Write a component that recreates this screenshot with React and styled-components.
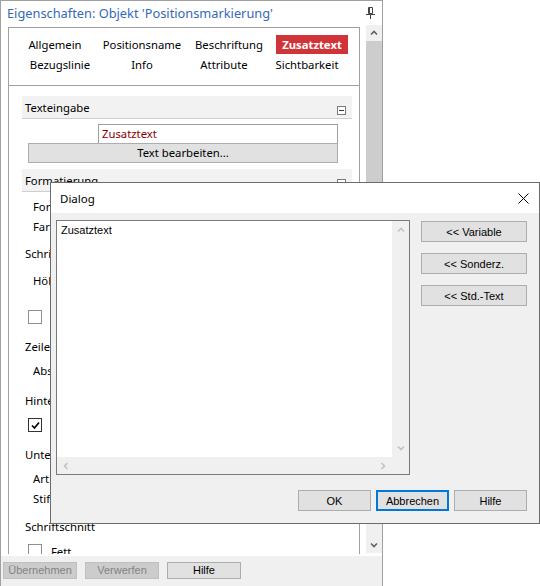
import React from 'react'
import styled, { createGlobalStyle } from 'styled-components'

// Grundstil der Seite
const GlobalStyle = createGlobalStyle`
  html, body {
    margin: 0;
    padding: 0;
    background: #fff;
  }
  body {
    font-family: "Noto Sans", "Liberation Sans", sans-serif;
    color: #000;
  }
`

const Screen = styled.div`
  position: relative;
  width: 540px;
  height: 586px;
  overflow: hidden;
  background: #fff;
`

// Eigenschaften-Fenster
const Window = styled.div`
  width: 383px;
  height: 586px;
  box-sizing: border-box;
  border: 1px solid #a0a0a0;
  border-bottom: none;
  display: flex;
  flex-direction: column;
  background: #fff;
`

const TitleBar = styled.div`
  height: 24px;
  flex-shrink: 0;
  display: flex;
  align-items: center;
  justify-content: space-between;
  padding: 0 7px 0 6px;
`

const TitleText = styled.span`
  font-size: 12.8px;
  color: #3469b8;
  white-space: nowrap;
`

const Body = styled.div`
  flex: 1;
  min-height: 0;
  display: flex;
  gap: 6px;
  padding-left: 7px;
`

const Panel = styled.div`
  width: 352px;
  margin: 2px 0 2px;
  box-sizing: border-box;
  border: 1px solid #a0a0a0;
  border-bottom: none;
  overflow: hidden;
`

const TabStrip = styled.div`
  padding: 7px 0 10px 3px;
  border-bottom: 1px solid #a0a0a0;
`

const TabRow = styled.div`
  display: grid;
  grid-template-columns: ${p => p.$cols};
  height: 20px;
`

const Tab = styled.div`
  justify-self: center;
  height: 19px;
  line-height: 19px;
  padding: 0 6px;
  font-size: 11.3px;
  white-space: nowrap;
  color: ${p => (p.$active ? '#fff' : '#000')};
  background: ${p => (p.$active ? '#d13438' : 'transparent')};
  font-weight: ${p => (p.$active ? 700 : 400)};
`

const Section = styled.div`
  margin: ${p => p.$mt}px 7px 0 13px;
`

const SectionHeader = styled.div`
  height: 22px;
  display: flex;
  justify-content: space-between;
  background: #f2f2f2;
  border-bottom: 1px solid #cfcfcf;
  padding-left: 3px;
  font-size: 11.3px;
`

const SectionLabel = styled.span`
  align-self: center;
  white-space: nowrap;
`

const CollapseBox = styled.span`
  align-self: flex-end;
  width: 7px;
  height: 7px;
  margin: 0 6px 3px 0;
  border: 1px solid #7a7a7a;
  background: #fff;
  display: flex;
  align-items: center;
  justify-content: center;
  &::after {
    content: '';
    width: 5px;
    height: 1px;
    background: #333;
  }
`

const TextField = styled.div`
  margin: 5px 0 0 76px;
  width: 240px;
  height: 20px;
  box-sizing: border-box;
  border: 1px solid #a0a0a0;
  padding-left: 3px;
  font-size: 11.3px;
  line-height: 18px;
  color: #8b0000;
`

const WideButton = styled.div`
  margin: -1px 0 0 6px;
  width: 310px;
  height: 20px;
  box-sizing: border-box;
  border: 1px solid #adadad;
  background: #e1e1e1;
  text-align: center;
  font-size: 11.3px;
  line-height: 18px;
`

const FormRow = styled.div`
  height: ${p => p.$h || 20}px;
  margin-top: ${p => p.$mt}px;
  display: flex;
  align-items: center;
  gap: 9px;
  padding-left: ${p => p.$indent}px;
  font-size: 11.3px;
  white-space: nowrap;
`

const Box = styled.span`
  width: 14px;
  height: 14px;
  flex-shrink: 0;
  box-sizing: border-box;
  border: 1px solid ${p => (p.$checked ? '#333' : '#8f8f8f')};
  background: #fff;
  display: flex;
  align-items: center;
  justify-content: center;
`

const ScrollBar = styled.div`
  width: 16px;
  margin-bottom: 3px;
  display: flex;
  flex-direction: column;
  background: #f0f0f0;
`

const ArrowCell = styled.div`
  height: 16px;
  flex-shrink: 0;
  display: flex;
  align-items: center;
  justify-content: center;
`

const Thumb = styled.div`
  height: 481px;
  flex-shrink: 0;
  background: #cdcdcd;
`

const Track = styled.div`
  flex: 1;
`

const Footer = styled.div`
  height: 30px;
  box-sizing: border-box;
  flex-shrink: 0;
  display: flex;
  align-items: flex-start;
  gap: 8px;
  padding: 6px 0 0 2px;
  background: #f0f0f0;
`

const FooterButton = styled.div`
  width: 74px;
  height: 17px;
  box-sizing: border-box;
  border: 1px solid ${p => (p.$disabled ? '#bfbfbf' : '#adadad')};
  background: ${p => (p.$disabled ? '#cccccc' : '#e1e1e1')};
  color: ${p => (p.$disabled ? '#838383' : '#000')};
  font-family: "Liberation Sans", Arial, sans-serif;
  font-size: 11px;
  line-height: 15px;
  text-align: center;
`

// Dialog über dem Fenster
const Dialog = styled.div`
  position: absolute;
  left: 50px;
  top: 182px;
  width: 490px;
  height: 342px;
  box-sizing: border-box;
  border: 1px solid #6b6b6b;
  background: #f0f0f0;
  display: flex;
  flex-direction: column;
`

const DialogTitle = styled.div`
  height: 30px;
  flex-shrink: 0;
  display: flex;
  align-items: center;
  justify-content: space-between;
  padding: 0 10px 0 9px;
  background: #fff;
  font-size: 11.5px;
`

const DialogBody = styled.div`
  flex: 1;
  display: flex;
  flex-direction: column;
  padding: 7px 12px 12px 5px;
  font-family: "Liberation Sans", Arial, sans-serif;
  font-size: 11px;
`

const TopRow = styled.div`
  display: flex;
  gap: 11px;
`

const TextArea = styled.div`
  width: 354px;
  height: 255px;
  box-sizing: border-box;
  border: 1px solid #7a7a7a;
  background: #fff;
  display: grid;
  grid-template-columns: 1fr 17px;
  grid-template-rows: 1fr 17px;
`

const TextContent = styled.div`
  padding: 2px 0 0 4px;
  line-height: 14px;
`

const VScroll = styled.div`
  background: #f0f0f0;
  display: flex;
  flex-direction: column;
  justify-content: space-between;
  align-items: center;
  padding: 5px 0;
`

const HScroll = styled.div`
  background: #f0f0f0;
  display: flex;
  justify-content: space-between;
  align-items: center;
  padding: 0 5px;
`

const Corner = styled.div`
  background: #f0f0f0;
`

const SideButtons = styled.div`
  display: flex;
  flex-direction: column;
  gap: 11px;
  padding-top: 1px;
`

const DialogButton = styled.div`
  width: ${p => p.$w}px;
  height: 21px;
  box-sizing: border-box;
  border: ${p => (p.$focus ? '2px solid #0078d7' : '1px solid #adadad')};
  background: #e1e1e1;
  display: flex;
  align-items: center;
  justify-content: center;
  white-space: nowrap;
`

const BottomRow = styled.div`
  display: flex;
  justify-content: flex-end;
  gap: 5px;
  margin-top: 15px;
`

const ChevronSvg = styled.svg`
  display: block;
  transform: rotate(${p => p.$rot}deg);
`

const Chevron = ({ dir = 'up', color = '#606060' }) => {
  const rot = { up: 0, right: 90, down: 180, left: 270 }[dir]
  return (
    <ChevronSvg $rot={rot} width="8" height="8" viewBox="0 0 8 8">
      <polyline points="1,5.5 4,2.5 7,5.5" fill="none" stroke={color} strokeWidth="1.6" />
    </ChevronSvg>
  )
}

const PinIcon = () => (
  <svg width="9" height="12" viewBox="0 0 9 12">
    <path d="M2.5 0.5h4v6h-4z M3.5 1v5.5" fill="none" stroke="#444" />
    <path d="M0 7.5h9 M4.5 7.5v4.5" fill="none" stroke="#444" />
  </svg>
)

const CloseIcon = () => (
  <svg width="11" height="11" viewBox="0 0 11 11">
    <path d="M0.5 0.5l10 10 M10.5 0.5l-10 10" stroke="#000" strokeWidth="1" fill="none" />
  </svg>
)

const CheckMark = () => (
  <svg width="9" height="9" viewBox="0 0 9 9">
    <polyline points="1,4.5 3.5,7 8,1.5" fill="none" stroke="#000" strokeWidth="1.7" />
  </svg>
)

// Reiter in zwei Zeilen, jede Zeile mit eigenen Spaltenbreiten
const tabRows = [
  { cols: '86px 88px 86px 80px', items: ['Allgemein', 'Positionsname', 'Beschriftung', 'Zusatztext'] },
  { cols: '96px 68px 96px 70px', items: ['Bezugslinie', 'Info', 'Attribute', 'Sichtbarkeit'] },
]

// Zeilen im Abschnitt "Formatierung" (größtenteils vom Dialog verdeckt)
const formatRows = [
  { label: 'Format', indent: 11, mt: 4 },
  { label: 'Farbe', indent: 11, mt: 0 },
  { label: 'Schriftart', indent: 3, mt: 7 },
  { label: 'Höhe', indent: 11, mt: 7 },
  { label: 'Breite anpassen', indent: 6, mt: 17, check: false },
  { label: 'Zeilenabstand', indent: 3, mt: 9 },
  { label: 'Abstand', indent: 11, mt: 4 },
  { label: 'Hintergrund', indent: 3, mt: 10 },
  { label: 'Hintergrund füllen', indent: 6, mt: 5, check: true },
  { label: 'Unterstreichung', indent: 3, mt: 9 },
  { label: 'Art', indent: 11, mt: 5, h: 18 },
  { label: 'Stift', indent: 11, mt: 1 },
  { label: 'Schriftschnitt', indent: 3, mt: 8 },
  { label: 'Fett', indent: 6, mt: 5, check: false },
]

export default function App() {
  return (
    <>
      <GlobalStyle />
      <Screen>
        <Window>
          <TitleBar>
            <TitleText>Eigenschaften: Objekt 'Positionsmarkierung'</TitleText>
            <PinIcon />
          </TitleBar>
          <Body>
            <Panel>
              <TabStrip>
                {tabRows.map((row, i) => (
                  <TabRow key={i} $cols={row.cols}>
                    {row.items.map(t => (
                      <Tab key={t} $active={t === 'Zusatztext'}>{t}</Tab>
                    ))}
                  </TabRow>
                ))}
              </TabStrip>

              <Section $mt={10}>
                <SectionHeader>
                  <SectionLabel>Texteingabe</SectionLabel>
                  <CollapseBox />
                </SectionHeader>
                <TextField>Zusatztext</TextField>
                <WideButton>Text bearbeiten...</WideButton>
              </Section>

              <Section $mt={6}>
                <SectionHeader>
                  <SectionLabel>Formatierung</SectionLabel>
                  <CollapseBox />
                </SectionHeader>
                {formatRows.map(r => (
                  <FormRow key={r.label} $indent={r.indent} $mt={r.mt} $h={r.h}>
                    {r.check !== undefined && (
                      <Box $checked={r.check}>{r.check && <CheckMark />}</Box>
                    )}
                    <span>{r.label}</span>
                  </FormRow>
                ))}
              </Section>
            </Panel>

            <ScrollBar>
              <ArrowCell><Chevron dir="up" /></ArrowCell>
              <Thumb />
              <Track />
              <ArrowCell><Chevron dir="down" /></ArrowCell>
            </ScrollBar>
          </Body>
          <Footer>
            <FooterButton $disabled>Übernehmen</FooterButton>
            <FooterButton $disabled>Verwerfen</FooterButton>
            <FooterButton>Hilfe</FooterButton>
          </Footer>
        </Window>

        <Dialog>
          <DialogTitle>
            <span>Dialog</span>
            <CloseIcon />
          </DialogTitle>
          <DialogBody>
            <TopRow>
              <TextArea>
                <TextContent>Zusatztext</TextContent>
                <VScroll>
                  <Chevron dir="up" color="#c2c2c2" />
                  <Chevron dir="down" color="#c2c2c2" />
                </VScroll>
                <HScroll>
                  <Chevron dir="left" color="#c2c2c2" />
                  <Chevron dir="right" color="#c2c2c2" />
                </HScroll>
                <Corner />
              </TextArea>
              <SideButtons>
                <DialogButton $w={106}>&lt;&lt; Variable</DialogButton>
                <DialogButton $w={106}>&lt;&lt; Sonderz.</DialogButton>
                <DialogButton $w={106}>&lt;&lt; Std.-Text</DialogButton>
              </SideButtons>
            </TopRow>
            <BottomRow>
              <DialogButton $w={73}>OK</DialogButton>
              <DialogButton $w={73} $focus>Abbrechen</DialogButton>
              <DialogButton $w={73}>Hilfe</DialogButton>
            </BottomRow>
          </DialogBody>
        </Dialog>
      </Screen>
    </>
  )
}
